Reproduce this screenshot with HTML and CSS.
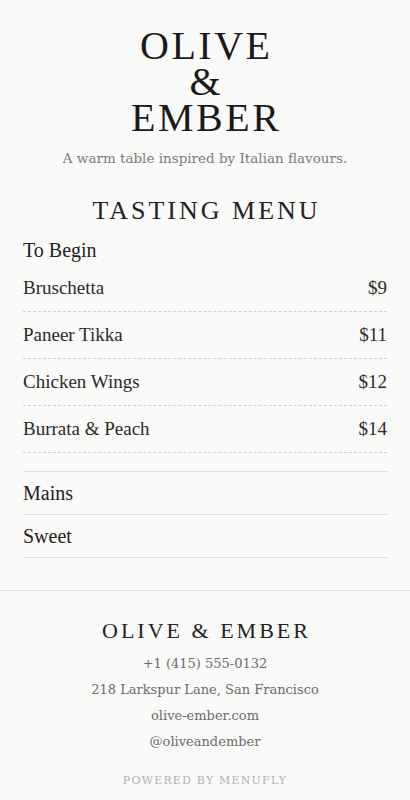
FILE: index.html
```html
<!DOCTYPE html>
<html lang="en">
<head>
<meta charset="utf-8">
<title>Olive &amp; Ember</title>
<link rel="stylesheet" href="styles.css">
</head>
<body>
<header class="hero">
  <h1 class="brand"><span>OLIVE</span><span>&amp;</span><span>EMBER</span></h1>
  <p class="tagline">A warm table inspired by Italian flavours.</p>
</header>
<main class="menu">
  <h2 class="menu-title">TASTING MENU</h2>
  <section class="section open">
    <h3 class="section-head">To Begin</h3>
    <ul class="items">
      <li class="item"><span>Bruschetta</span><span>$9</span></li>
      <li class="item"><span>Paneer Tikka</span><span>$11</span></li>
      <li class="item"><span>Chicken Wings</span><span>$12</span></li>
      <li class="item"><span>Burrata &amp; Peach</span><span>$14</span></li>
    </ul>
  </section>
  <section class="section">
    <h3 class="section-head">Mains</h3>
  </section>
  <section class="section">
    <h3 class="section-head">Sweet</h3>
  </section>
</main>
<footer class="footer">
  <h2 class="footer-brand">OLIVE &amp; EMBER</h2>
  <ul class="contact">
    <li>+1 (415) 555-0132</li>
    <li>218 Larkspur Lane, San Francisco</li>
    <li>olive-ember.com</li>
    <li>@oliveandember</li>
  </ul>
  <p class="powered">POWERED BY MENUFLY</p>
</footer>
</body>
</html>
```
FILE: styles.css
```css
* { box-sizing: border-box; }
html, body { margin: 0; padding: 0; }
body {
  background: #fafaf9;
  color: #222;
  font-family: "Liberation Serif", "Times New Roman", serif;
}
.hero {
  padding: 28px 23px 0;
  text-align: center;
}
.brand {
  margin: 0;
  font-weight: 400;
  font-size: 40px;
  line-height: 36px;
  letter-spacing: 2.5px;
  padding-left: 2.5px;
  color: #1a1a1a;
}
.brand span { display: block; }
.tagline {
  margin: 12px 0 0;
  font-family: "DejaVu Serif", serif;
  font-size: 13.5px;
  line-height: 20px;
  color: #7a7a7a;
}
.menu {
  padding: 0 23px;
}
.menu-title {
  margin: 27px 0 0;
  text-align: center;
  font-weight: 400;
  font-size: 26px;
  line-height: 32px;
  letter-spacing: 3px;
  padding-left: 3px;
  color: #222;
}
.section {
  border-bottom: 1px solid #dcdcdc;
}
.section-head {
  margin: 0;
  font-weight: 400;
  font-size: 20px;
  line-height: 24px;
  padding: 9px 0;
  color: #222;
}
.section.open { padding-bottom: 18px; }
.section.open .section-head { padding: 11px 0 3px; }
.items {
  list-style: none;
  margin: 0;
  padding: 0;
}
.item {
  display: flex;
  justify-content: space-between;
  padding: 11px 0;
  font-size: 19px;
  line-height: 24px;
  color: #2a2a2a;
  border-bottom: 1px dashed #cfcfcf;
}
.footer {
  margin-top: 32px;
  border-top: 1px solid #dcdcdc;
  padding: 26px 23px 10px;
  text-align: center;
}
.footer-brand {
  margin: 0;
  font-weight: 400;
  font-size: 22px;
  line-height: 28px;
  letter-spacing: 3px;
  padding-left: 3px;
  color: #222;
}
.contact {
  list-style: none;
  margin: 6px 0 0;
  padding: 0;
  font-family: "DejaVu Serif", serif;
  font-size: 13px;
  line-height: 26px;
  color: #6b6b6b;
}
.powered {
  margin: 18px 0 0;
  font-family: "DejaVu Serif", serif;
  font-size: 11px;
  line-height: 16px;
  letter-spacing: 1.2px;
  color: #b0b0b0;
}
```
